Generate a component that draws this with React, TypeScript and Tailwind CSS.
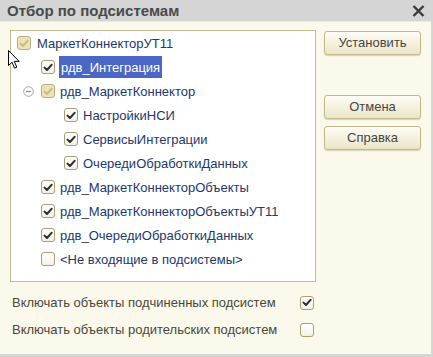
import React from "react";

type CheckState = "on" | "off" | "partial";

function Check({ state }: { state: CheckState }) {
  const partial = state === "partial";
  return (
    <div
      className={
        "w-[14px] h-[14px] shrink-0 rounded-[3px] border flex items-center justify-center " +
        (partial
          ? "border-[#b9ae7f] bg-[#ece3b9]"
          : "border-[#a89f78] bg-gradient-to-b from-[#ffffff] to-[#f3f1e6]")
      }
    >
      {state !== "off" && (
        <svg width="10" height="9" viewBox="0 0 10 9">
          <path
            d="M1.5 4.6 L4 7 L8.6 1.8"
            fill="none"
            stroke={partial ? "#c9bb82" : "#2e2e2e"}
            strokeWidth="2"
            strokeLinecap="round"
            strokeLinejoin="round"
          />
        </svg>
      )}
    </div>
  );
}

function Row({
  level,
  state,
  text,
  selected,
  expander,
}: {
  level: 0 | 1 | 2;
  state: CheckState;
  text: string;
  selected?: boolean;
  expander?: boolean;
}) {
  const pad = level === 0 ? "pl-[6px]" : level === 1 ? "pl-[12px]" : "pl-[53px]";
  return (
    <div className={"h-[24px] flex items-center " + pad}>
      {level === 1 && (
        <div className="w-[18px] shrink-0 flex items-center">
          {expander && (
            <svg width="11" height="11" viewBox="0 0 11 11">
              <circle cx="5.5" cy="5.5" r="4.8" fill="#fff" stroke="#a3a3a3" strokeWidth="1" />
              <path d="M3 5.5 H8" stroke="#8a8a8a" strokeWidth="1.2" />
            </svg>
          )}
        </div>
      )}
      <Check state={state} />
      {selected ? (
        <span className="ml-[4px] px-[2px] h-[22px] flex items-center bg-[#4b66c4] text-white text-[13px] leading-none">
          {text}
        </span>
      ) : (
        <span className={(level === 0 ? "ml-[6px]" : "ml-[5px]") + " text-[13px] leading-none text-[#23386b]"}>
          {text}
        </span>
      )}
    </div>
  );
}

function Btn({ label }: { label: string }) {
  return (
    <div className="h-[24px] w-[97px] rounded-[3px] border border-[#c2b88d] bg-gradient-to-b from-[#fefdf6] to-[#ebe5c7] shadow-[0_1px_1px_rgba(150,140,100,0.35)] flex items-center justify-center text-[13px] text-[#454545]">
      {label}
    </div>
  );
}

export default function App() {
  return (
    <div
      className="relative w-[433px] h-[357px] bg-[#d5d5d5] flex flex-col overflow-hidden"
      style={{ fontFamily: '"Liberation Sans", Arial, sans-serif' }}
    >
      <div className="h-[21px] shrink-0 flex items-center justify-between pl-[7px] pr-[8px]">
        <span className="text-[15px] font-bold text-[#4a4a4a] leading-none">Отбор по подсистемам</span>
        <svg width="13" height="12" viewBox="0 0 13 12">
          <path d="M1.5 1 L11.5 11 M11.5 1 L1.5 11" stroke="#3a3a3a" strokeWidth="2.4" />
        </svg>
      </div>
      <div className="flex-1 mr-[2px] mb-[3px] bg-[#fbf9ec] border-t border-[#eeebd8] flex flex-col">
        <div className="flex pl-[10px] pt-[8px]">
          <div className="w-[306px] h-[252px] border border-[#c4bc95] bg-white">
            <Row level={0} state="partial" text="МаркетКоннекторУТ11" />
            <Row level={1} state="on" text="рдв_Интеграция" selected />
            <Row level={1} state="partial" text="рдв_МаркетКоннектор" expander />
            <Row level={2} state="on" text="НастройкиНСИ" />
            <Row level={2} state="on" text="СервисыИнтеграции" />
            <Row level={2} state="on" text="ОчередиОбработкиДанных" />
            <Row level={1} state="on" text="рдв_МаркетКоннекторОбъекты" />
            <Row level={1} state="on" text="рдв_МаркетКоннекторОбъектыУТ11" />
            <Row level={1} state="on" text="рдв_ОчередиОбработкиДанных" />
            <Row level={1} state="off" text="<Не входящие в подсистемы>" />
          </div>
          <div className="ml-[8px] pt-[1px] flex flex-col">
            <Btn label="Установить" />
            <div className="mt-[40px]">
              <Btn label="Отмена" />
            </div>
            <div className="mt-[7px]">
              <Btn label="Справка" />
            </div>
          </div>
        </div>
        <div className="pl-[12px] pt-[7px] flex flex-col">
          <div className="h-[27px] flex items-center">
            <span className="w-[288px] text-[13px] text-[#4a4838]">Включать объекты подчиненных подсистем</span>
            <Check state="on" />
          </div>
          <div className="h-[27px] flex items-center">
            <span className="w-[288px] text-[13px] text-[#4a4838]">Включать объекты родительских подсистем</span>
            <Check state="off" />
          </div>
        </div>
      </div>
      <svg className="absolute left-[8px] top-[50px]" width="13" height="20" viewBox="0 0 13 20">
        <path
          d="M0.5 0.5 L0.5 15.5 L4 12.2 L6.6 18.2 L8.8 17.2 L6.3 11.4 L11.2 11.4 Z"
          fill="#fff"
          stroke="#000"
          strokeWidth="1"
          strokeLinejoin="miter"
        />
      </svg>
    </div>
  );
}
